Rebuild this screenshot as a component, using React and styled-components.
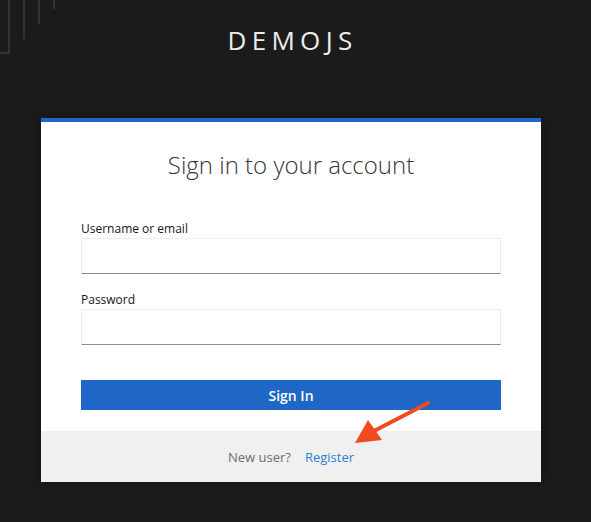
import React from "react";
import styled, { createGlobalStyle } from "styled-components";

const GlobalStyle = createGlobalStyle`
  html, body {
    margin: 0;
    padding: 0;
    background: #1b1b1b;
  }
  body {
    font-family: "Open Sans", "Liberation Sans", sans-serif;
  }
`;

const Page = styled.div`
  position: relative;
  width: 591px;
  height: 522px;
  overflow: hidden;
  background: #1b1b1b;
`;

const Decor = styled.svg`
  position: absolute;
  left: 0;
  top: 0;
`;

const Header = styled.div`
  height: 118px;
  padding: 22px 6px 0 0;
  box-sizing: border-box;
  text-align: center;
  color: #ececec;
  font-size: 26px;
  letter-spacing: 5.3px;
  line-height: 36px;
`;

const Card = styled.div`
  margin-left: 41px;
  width: 500px;
  background: #fff;
  border-top: 4px solid #1f66c6;
  box-shadow: 0 0 12px rgba(0, 0, 0, 0.35);
`;

const Body = styled.div`
  padding: 27px 40px 21px;
`;

const Title = styled.h1`
  margin: 0 0 40px;
  text-align: center;
  font-weight: 300;
  font-size: 24px;
  line-height: 32px;
  color: #363636;
`;

const Field = styled.div`
  margin-bottom: 18px;
`;

const Label = styled.label`
  display: block;
  font-size: 12px;
  line-height: 16px;
  color: #151515;
  margin-bottom: 1px;
`;

const Input = styled.input`
  display: block;
  box-sizing: border-box;
  width: 100%;
  height: 36px;
  border: 1px solid #ededed;
  border-bottom: 1px solid #8a8d90;
  background: #fff;
  outline: none;
`;

const Button = styled.button`
  display: block;
  width: 100%;
  height: 30px;
  margin-top: 35px;
  border: none;
  background: #1f66c6;
  color: #fff;
  font-family: "Open Sans", "Liberation Sans", sans-serif;
  font-weight: 600;
  font-size: 14px;
`;

const Footer = styled.div`
  background: #f0f0f0;
  height: 51px;
  display: flex;
  align-items: center;
  justify-content: center;
  gap: 14px;
  font-size: 13px;
`;

const Muted = styled.span`
  color: #6a6e73;
`;

const Link = styled.a`
  color: #2a7fcf;
  text-decoration: none;
`;

const Arrow = styled.svg`
  position: absolute;
  left: 0;
  top: 0;
  pointer-events: none;
`;

export default function App() {
  return (
    <>
      <GlobalStyle />
      <Page>
        <Decor width="80" height="60">
          <g stroke="#333" strokeWidth="2" fill="none">
            <path d="M9 0 V53 H0" />
            <path d="M24 0 V39" />
            <path d="M39 0 V24" />
            <path d="M54 0 V9" />
          </g>
        </Decor>
        <Header>DEMOJS</Header>
        <Card>
          <Body>
            <Title>Sign in to your account</Title>
            <Field>
              <Label>Username or email</Label>
              <Input type="text" />
            </Field>
            <Field>
              <Label>Password</Label>
              <Input type="password" />
            </Field>
            <Button>Sign In</Button>
          </Body>
          <Footer>
            <Muted>New user?</Muted>
            <Link href="#">Register</Link>
          </Footer>
        </Card>
        <Arrow width="591" height="522">
          <line x1="428" y1="403" x2="372" y2="432" stroke="#f04a22" strokeWidth="4" strokeLinecap="round" />
          <polygon points="355,443 368,420 382,440" fill="#f04a22" />
        </Arrow>
      </Page>
    </>
  );
}
